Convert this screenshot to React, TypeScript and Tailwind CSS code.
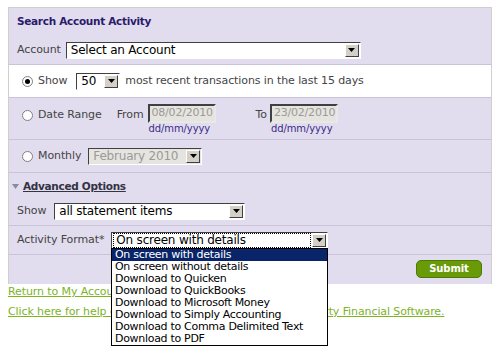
import React from "react";

const font = { fontFamily: '"DejaVu Sans", Verdana, sans-serif' };

function Arrow() {
  return (
    <div className="flex h-[13px] w-[14px] shrink-0 items-center justify-center border border-t-white border-l-white border-r-[#404040] border-b-[#404040] bg-[#d4d0c8]">
      <svg width="7" height="4" viewBox="0 0 7 4">
        <path d="M0 0h7L3.5 4z" fill="#000" />
      </svg>
    </div>
  );
}

function FakeSelect({
  value,
  className,
  disabled,
  focused,
}: {
  value: string;
  className: string;
  disabled?: boolean;
  focused?: boolean;
}) {
  return (
    <div
      className={`flex h-[17px] items-center justify-between border border-t-[#404040] border-l-[#404040] border-r-white border-b-white pr-[1px] ${
        disabled ? "bg-[#e6e4de] text-[#9a9a9a]" : "bg-white text-black"
      } ${className}`}
    >
      <span
        className={`ml-[2px] mr-[2px] flex h-[13px] items-center whitespace-nowrap px-[2px] text-[12px] leading-none tracking-[-0.2px] ${
          focused ? "flex-1 outline outline-1 outline-dotted outline-black" : ""
        }`}
      >
        {value}
      </span>
      <Arrow />
    </div>
  );
}

function Radio({ checked }: { checked?: boolean }) {
  return (
    <div className="flex h-[11px] w-[11px] items-center justify-center rounded-full border border-[#808080] bg-white">
      {checked && <div className="h-[5px] w-[5px] rounded-full bg-black" />}
    </div>
  );
}

function DateInput({ value }: { value: string }) {
  return (
    <div className="flex flex-col">
      <div className="flex h-[19px] w-[68px] items-center border-2 border-t-[#404040] border-l-[#404040] border-r-[#e8e8e8] border-b-[#e8e8e8] bg-[#e6e4de] pl-[2px] text-[11px] tracking-[-0.2px] text-[#9a9a9a]">
        {value}
      </div>
      <span className="pl-[1px] text-[10px] leading-[12px] text-[#3b2b86]">dd/mm/yyyy</span>
    </div>
  );
}

const options = [
  "On screen with details",
  "On screen without details",
  "Download to Quicken",
  "Download to QuickBooks",
  "Download to Microsoft Money",
  "Download to Simply Accounting",
  "Download to Comma Delimited Text",
  "Download to PDF",
];

export default function App() {
  return (
    <div
      className="relative h-[354px] w-[500px] overflow-hidden bg-white text-[11px] tracking-[-0.1px] text-[#444]"
      style={font}
    >
      <div className="px-[8px] pt-[7px]">
        <div className="border border-b-0 border-[#cfcfcf] bg-[#e1ddee]">
          {/* Title */}
          <div className="flex h-[27px] items-center pl-[8px]">
            <h1 className="text-[10.5px] font-bold tracking-[-0.3px] text-[#2c1a6b]">Search Account Activity</h1>
          </div>

          {/* Account */}
          <div className="flex h-[29px] items-center gap-[5px] pb-[-1px] pl-[8px] pt-[1px]">
            <span>Account</span>
            <FakeSelect value="Select an Account" className="w-[295px]" />
          </div>
          <div className="h-px bg-[#c8c3d8]" />

          {/* Show recent */}
          <div className="flex h-[32px] items-center bg-white pl-[13px]">
            <Radio checked />
            <span className="ml-[5px]">Show</span>
            <FakeSelect value="50" className="ml-[9px] w-[44px]" />
            <span className="ml-[5px]">most recent transactions in the last 15 days</span>
          </div>
          <div className="h-px bg-[#c8c3d8]" />

          {/* Date range */}
          <div className="flex h-[41px] items-start pl-[13px] pt-[6px]">
            <div className="mt-[3px] flex items-center">
              <Radio />
              <span className="ml-[5px]">Date Range</span>
              <span className="ml-[15px]">From</span>
            </div>
            <div className="ml-[4px]">
              <DateInput value="08/02/2010" />
            </div>
            <span className="ml-[40px] mt-[3px]">To</span>
            <div className="ml-[3px]">
              <DateInput value="23/02/2010" />
            </div>
          </div>
          <div className="h-px bg-[#c8c3d8]" />

          {/* Monthly */}
          <div className="flex h-[32px] items-center pl-[13px]">
            <Radio />
            <span className="ml-[5px]">Monthly</span>
            <FakeSelect value="February 2010" className="ml-[7px] w-[114px]" disabled />
          </div>
          <div className="h-px bg-[#c8c3d8]" />

          {/* Advanced options */}
          <div className="flex h-[52px] flex-col pl-[3px]">
            <div className="mt-[6px] flex items-center gap-[4px]">
              <svg width="7" height="5" viewBox="0 0 7 5">
                <path d="M0 0h7L3.5 5z" fill="#8a8aa0" />
              </svg>
              <span className="text-[10.5px] font-bold tracking-[-0.3px] text-[#333344] underline">Advanced Options</span>
            </div>
            <div className="mt-[8px] flex items-center gap-[8px] pl-[5px]">
              <span>Show</span>
              <FakeSelect value="all statement items" className="w-[191px]" />
            </div>
          </div>
          <div className="h-px bg-[#c8c3d8]" />

          {/* Activity format */}
          <div className="flex h-[28px] items-center gap-[7px] pl-[8px]">
            <span>Activity Format*</span>
            <FakeSelect value="On screen with details" className="w-[217px]" focused />
          </div>
          <div className="h-px bg-[#c8c3d8]" />

          {/* Submit */}
          <div className="flex h-[29px] items-center justify-end pr-[9px]">
            <button className="mb-[2px] h-[18px] w-[66px] rounded-[5px] border border-[#4d7a05] bg-[#699a08] text-[10px] font-bold text-white">
              Submit
            </button>
          </div>
        </div>

        <div className="mt-[1px] flex flex-col gap-[7px] text-[11px] leading-[13px] text-[#7cb426]">
          <a className="underline">Return to My Account Summary</a>
          <a className="underline">Click here for help on using these downloads with Third Party Financial Software.</a>
        </div>
      </div>

      {/* Open dropdown list */}
      <div className="absolute left-[111px] top-[248px] w-[217px] border border-[#000] bg-white text-[11px] tracking-[-0.3px] text-black">
        {options.map((o, i) => (
          <div
            key={o}
            className={`h-[12px] whitespace-nowrap pl-[3px] leading-[12px] ${i === 0 ? "bg-[#0a246a] text-white" : ""}`}
          >
            {o}
          </div>
        ))}
      </div>
    </div>
  );
}
